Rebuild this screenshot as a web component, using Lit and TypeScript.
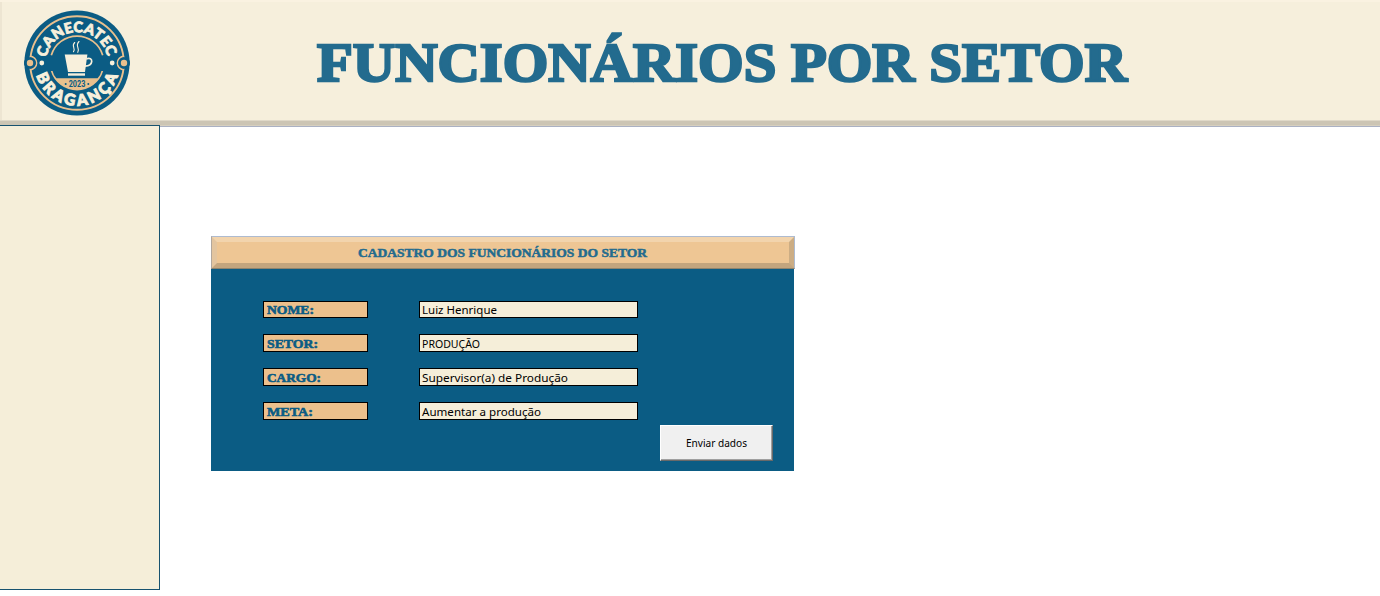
import { LitElement, html, svg, css } from "lit";
import { customElement, property } from "lit/decorators.js";

/** A single line of text fitted to a fixed measure. */
@customElement("fit-text")
class FitText extends LitElement {
  @property() text = "";
  @property({ type: Number }) measure = 100;
  @property({ type: Number }) box = 18;
  @property({ type: Number }) baseline = 13;
  @property({ type: Number }) weight = 0;
  static styles = css`
    :host { display: block; line-height: 0; }
    svg { display: block; overflow: visible; }
    text { fill: currentColor; stroke: currentColor; }
  `;
  render() {
    return html`<svg width=${this.measure} height=${this.box}>
      <text x="0" y=${this.baseline} textLength=${this.measure} lengthAdjust="spacingAndGlyphs"
        stroke-width=${this.weight}>${this.text}</text>
    </svg>`;
  }
}

@customElement("brand-logo")
class BrandLogo extends LitElement {
  static styles = css`
    :host { display: block; width: 106px; height: 106px; }
    svg { display: block; }
    .ring { font: 900 14.5px Lato, "Open Sans", sans-serif; fill: #f8f0dc; stroke: #f8f0dc; stroke-width: 0.8; }
    .wide { font-size: 15.5px; stroke-width: 1; }
    .year { font: 700 8.4px Roboto, sans-serif; fill: #0b5c84; }
  `;
  render() {
    const side = (x: number) => svg`
      <circle cx=${x} cy="0" r="6.6" fill="#0b5c84" stroke="#eac08d" stroke-width="1.6"/>`;
    return html`<svg width="106" height="106" viewBox="-53 -53 106 106">
      <defs>
        <clipPath id="disc"><circle r="47.6"/></clipPath>
        <path id="top" d="M-30.6 -5.4A31.1 31.1 0 0 1 30.6 -5.4"/>
        <path id="bottom" d="M-40.8 12.5A42.7 42.7 0 0 0 40.8 12.5"/>
      </defs>
      <circle r="52.6" fill="#0b5c84"/>
      <circle r="46.8" fill="none" stroke="#eac08d" stroke-width="1.9"/>
      <g clip-path="url(#disc)">${side(-47)}${side(47)}</g>
      <path d="M-48.6 -5.6A5.8 5.8 0 0 0 -48.6 5.6ZM48.6 -5.6A5.8 5.8 0 0 1 48.6 5.6Z" fill="#0b5c84"/>
      <circle cx="-47" r="5.8" fill="#0b5c84"/><circle cx="47" r="5.8" fill="#0b5c84"/>
      <circle cx="-47" r="3.2" fill="#eac08d"/><circle cx="47" r="3.2" fill="#eac08d"/>
      <circle cx="-35.2" r="2.4" fill="#f8f0dc"/><circle cx="35.2" r="2.4" fill="#f8f0dc"/>
      <path d="M-25.7 -7.7A26.8 26.8 0 0 1 25.7 -7.7" fill="none" stroke="#eac08d" stroke-width="1.7"/>
      <path d="M-26.2 8A27.4 27.4 0 0 0 26.2 8L24.4 8Q23.7 12 20.6 15.3H-20.6Q-23.7 12 -24.4 8Z" fill="#eac08d"/>
      <path d="M-12.3 -8.5H10.4L8 9H-9Z" fill="#f8f0dc"/>
      <path d="M9.2 -4.2Q15 -5.6 14.7 -1.4Q14.2 2.8 8 3.2" fill="none" stroke="#f8f0dc" stroke-width="1.7"/>
      <path d="M-9 10.3H8V12.7H-9Z" fill="#f8f0dc"/>
      <path d="M-2.3 -20.5C-6.3 -16.7 -.8 -14.9 -3.5 -11.3M2 -21.5C-2.6 -16.9 3.5 -15 .8 -10.7" fill="none" stroke="#f8f0dc" stroke-width="1.1" stroke-linecap="round"/>
      <text class="ring"><textPath href="#top" textLength="85">CANECATEC</textPath></text>
      <text class="ring wide"><textPath href="#bottom" textLength="108" lengthAdjust="spacing">BRAGANÇA</textPath></text>
      <text class="year" x="-8.3" y="24" textLength="16.6" lengthAdjust="spacingAndGlyphs">2023</text>
      <circle cx="-11.3" cy="20.9" r="1" fill="#0b5c84"/><circle cx="11.3" cy="20.9" r="1" fill="#0b5c84"/>
    </svg>`;
  }
}

const rows = [
  { label: "NOME:", lw: 47, value: "Luiz Henrique", vw: 75, base: 12 },
  { label: "SETOR:", lw: 51, value: "PRODUÇÃO", vw: 58, base: 13 },
  { label: "CARGO:", lw: 54, value: "Supervisor(a) de Produção", vw: 146, base: 13 },
  { label: "META:", lw: 46, value: "Aumentar a produção", vw: 119, base: 13 },
];

@customElement("app-root")
class AppRoot extends LitElement {
  static styles = css`
    :host { display: block; height: 596px; background: #fff; overflow: hidden; }
    * { box-sizing: border-box; }
    header {
      height: 127px; display: grid; grid-template-columns: 317px 1fr;
      background: #f6efdc; border-bottom: 1px solid #aab1c3;
      box-shadow: inset 0 2px #faf2e1, inset 0 -1px #d6cfbf, inset 0 -5px #ccc5b4, inset 0 -6px #e0d9c8, inset 2px 0 #ede5d2;
    }
    brand-logo { margin: 10px 0 0 24px; }
    .title { margin-top: 24px; color: #236b8e; font: 700 55px "Liberation Serif", serif; }
    main { display: flex; align-items: flex-start; margin-top: -2px; }
    aside {
      width: 160px; height: 465px; flex: none; background: #f5eed9;
      border: 1px solid #17526f; border-left: 0; position: relative;
    }
    .card { width: 584px; margin: 111px 0 0 51px; }
    .caption {
      height: 33px; display: flex; justify-content: center;
      border: 1px solid #aebbd0; border-bottom-color: #8d846f; border-left-color: #b1a79d;
      background: #eec694;
    }
    .bevel {
      width: 582px; height: 31px; display: flex; justify-content: center; padding-right: 2px;
      border: 5px solid;
      border-color: #f2d4ad #ccad84 #c3a57e #e3c59f;
    }
    .bevel fit-text { color: #236b8e; font: 700 13px "Liberation Serif", serif; }
    form {
      width: 583px; height: 202px; margin: 0; padding: 32px 0 0 52px; background: #0b5c84;
      display: grid; grid-template-columns: 105px 219px 114px; column-gap: 51px;
    }
    .labels, .fields { display: flex; flex-direction: column; gap: 16px; }
    .cell { height: 18px; border: 1px solid #000; overflow: hidden; }
    .cell:first-child { height: 17px; }
    .labels .cell { background: #ecc08c; padding-left: 3px; color: #0b5c84; font: 700 13px "Liberation Serif", serif; }
    .fields .cell { background: #f5eed9; padding-left: 2px; color: #000; font: 11.3px "Noto Sans", sans-serif; }
    button {
      width: 113px; height: 36px; margin: 124px 0 0 -29px; padding: 0;
      display: flex; justify-content: center; align-items: center;
      background: #f0f0f0; color: #000; border: 1px solid; border-color: #fff #696969 #696969 #fff;
      box-shadow: inset -1px -1px #a0a0a0; border-radius: 0; font: 11.5px "Noto Sans", sans-serif;
    }
    button fit-text { font-size: 11px; }
  `;
  render() {
    return html`
      <header>
        <brand-logo></brand-logo>
        <fit-text class="title" text="FUNCIONÁRIOS POR SETOR" .measure=${810} .box=${80} .baseline=${57} .weight=${2.4}></fit-text>
      </header>
      <main>
        <aside></aside>
        <section class="card">
          <div class="caption"><div class="bevel">
            <fit-text text="CADASTRO DOS FUNCIONÁRIOS DO SETOR" .measure=${289} .box=${20} .baseline=${15} .weight=${0.5}></fit-text>
          </div></div>
          <form @submit=${(e: Event) => e.preventDefault()}>
            <div class="labels">${rows.map((r) => html`<div class="cell">
              <fit-text .text=${r.label} .measure=${r.lw} .box=${16} .baseline=${r.base} .weight=${0.6}></fit-text></div>`)}</div>
            <div class="fields">${rows.map((r) => html`<div class="cell">
              <fit-text .text=${r.value} .measure=${r.vw} .box=${16} .baseline=${r.base}></fit-text></div>`)}</div>
            <button type="submit"><fit-text text="Enviar dados" .measure=${61} .box=${18} .baseline=${13}></fit-text></button>
          </form>
        </section>
      </main>`;
  }
}
